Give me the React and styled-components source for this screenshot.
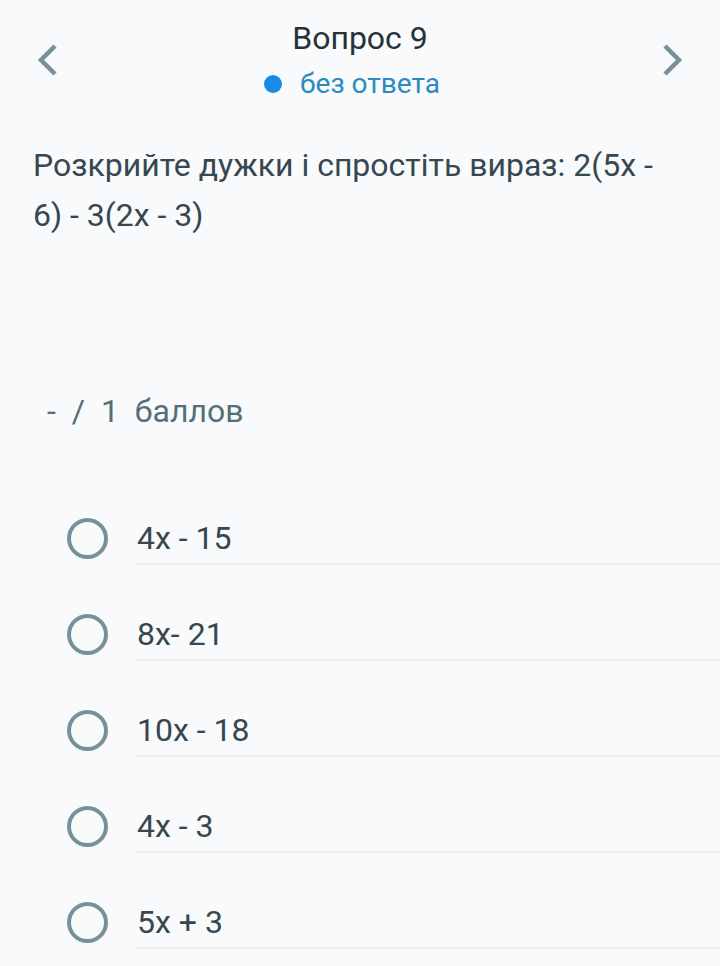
import React from "react";
import styled, { createGlobalStyle } from "styled-components";

const GlobalStyle = createGlobalStyle`
  html, body {
    margin: 0;
    padding: 0;
    background: #f8fafb;
  }
  body {
    font-family: Roboto, "Noto Sans", sans-serif;
  }
`;

const Page = styled.div`
  width: 720px;
  min-height: 966px;
  background: #f8fafb;
  overflow: hidden;
`;

const Header = styled.div`
  display: flex;
  align-items: flex-start;
  justify-content: space-between;
  padding: 20px 36px 0 36px;
  height: 88px;
`;

const NavButton = styled.div`
  width: 24px;
  height: 34px;
  display: flex;
  align-items: center;
  justify-content: center;
  margin-top: 23px;
`;

const TitleBlock = styled.div`
  display: flex;
  flex-direction: column;
  align-items: center;
`;

const Title = styled.div`
  font-size: 32px;
  line-height: 36px;
  color: #263238;
`;

const Status = styled.div`
  display: flex;
  align-items: center;
  gap: 18px;
  margin-top: 13px;
  margin-right: 16px;
  font-size: 28px;
  line-height: 30px;
  color: #2b8bc0;
`;

const Dot = styled.span`
  width: 18px;
  height: 18px;
  border-radius: 50%;
  background: #1a8ae6;
`;

const Question = styled.div`
  padding: 32px 33px 0 33px;
  font-size: 32px;
  line-height: 50px;
  color: #37474f;
`;

const Points = styled.div`
  margin-top: 151px;
  padding-left: 47px;
  font-size: 32px;
  line-height: 40px;
  color: #546e7a;
  word-spacing: 8px;
`;

const Options = styled.div`
  margin-top: 60px;
  display: flex;
  flex-direction: column;
`;

const Option = styled.label`
  display: flex;
  align-items: flex-start;
  height: 96px;
  padding-left: 67px;
`;

const Radio = styled.span`
  box-sizing: border-box;
  width: 41px;
  height: 41px;
  border-radius: 50%;
  border: 4px solid #78909c;
  flex-shrink: 0;
  margin-top: 27px;
`;

const OptionText = styled.div`
  flex: 1;
  margin-left: 29px;
  margin-top: 22px;
  height: 52px;
  display: flex;
  align-items: center;
  font-size: 32px;
  color: #37474f;
  border-bottom: 2px solid #eceff1;
  box-sizing: border-box;
`;

const Chevron = ({ dir }) => (
  <svg width="24" height="34" viewBox="0 0 24 34">
    <path
      d={dir === "left" ? "M19 3 L5 17 L19 31" : "M5 3 L19 17 L5 31"}
      fill="none"
      stroke="#78909c"
      strokeWidth="4.5"
    />
  </svg>
);

const answers = ["4x - 15", "8x- 21", "10x - 18", "4x - 3", "5x + 3"];

export default function App() {
  return (
    <Page>
      <GlobalStyle />
      <Header>
        <NavButton>
          <Chevron dir="left" />
        </NavButton>
        <TitleBlock>
          <Title>Вопрос 9</Title>
          <Status>
            <Dot />
            без ответа
          </Status>
        </TitleBlock>
        <NavButton>
          <Chevron dir="right" />
        </NavButton>
      </Header>
      <Question>Розкрийте дужки і спростіть вираз: 2(5x - 6) - 3(2x - 3)</Question>
      <Points>- / 1 баллов</Points>
      <Options>
        {answers.map((a) => (
          <Option key={a}>
            <Radio />
            <OptionText>{a}</OptionText>
          </Option>
        ))}
      </Options>
    </Page>
  );
}
